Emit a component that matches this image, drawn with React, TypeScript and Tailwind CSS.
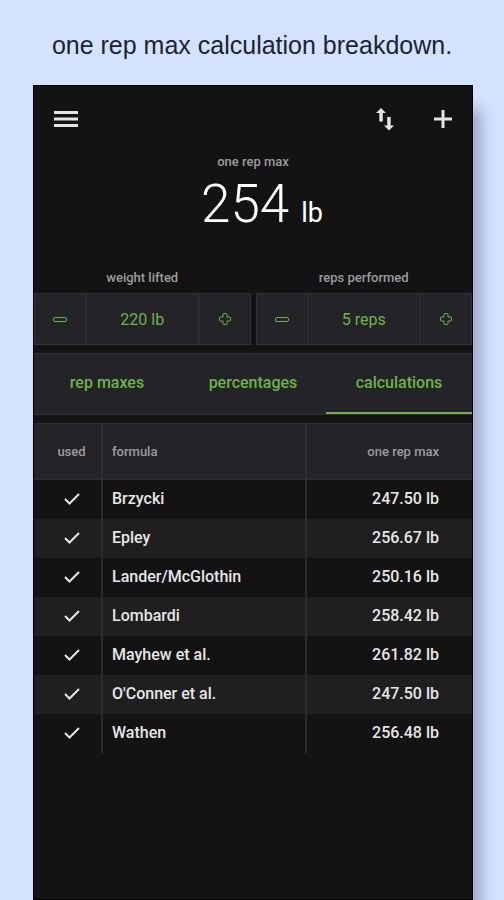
import React, { useState } from 'react';

interface Formula {
  name: string;
  max: string;
}

const formulas: Formula[] = [
  { name: 'Brzycki', max: '247.50 lb' },
  { name: 'Epley', max: '256.67 lb' },
  { name: 'Lander/McGlothin', max: '250.16 lb' },
  { name: 'Lombardi', max: '258.42 lb' },
  { name: 'Mayhew et al.', max: '261.82 lb' },
  { name: "O'Conner et al.", max: '247.50 lb' },
  { name: 'Wathen', max: '256.48 lb' },
];

const tabs = ['rep maxes', 'percentages', 'calculations'];

const MenuIcon = () => (
  <svg viewBox="0 0 24 18" className="w-6 h-[18px]" fill="currentColor">
    <path d="M0 1h24v3H0zM0 7.500h24v3H0zM0 14h24v3H0z" />
  </svg>
);

const SwapIcon = () => (
  <svg viewBox="0 0 18 24" className="w-[18px] h-6" fill="currentColor">
    <path d="M5 1L10 6H6.800V14.500H3.300V6H0Z" />
    <path d="M13 23.500L8 18.500H11.200V10H14.700V18.500H18Z" />
  </svg>
);

const PlusIcon = () => (
  <svg viewBox="0 0 18 18" className="w-[18px] h-[18px]" fill="currentColor">
    <path d="M7.5 0h3v7.5H18v3h-7.5V18h-3v-7.5H0v-3h7.5z" />
  </svg>
);

const MinusOutline = () => (
  <svg viewBox="0 0 14 14" className="w-3.5 h-3.5" fill="none" stroke="currentColor" strokeWidth="1">
    <rect x="0.5" y="5.500" width="13" height="4" rx="1.5" />
  </svg>
);

const PlusOutline = () => (
  <svg viewBox="0 0 14 14" className="w-3.5 h-3.5" fill="none" stroke="currentColor" strokeWidth="1" strokeLinejoin="round">
    <path d="M6 1.5h2q1 0 1 1V5h2.500q1 0 1 1v2q0 1-1 1H9v2.500q0 1-1 1H6q-1 0-1-1V9H2.500q-1 0-1-1V6q0-1 1-1H5V2.500q0-1 1-1z" />
  </svg>
);

const CheckIcon = () => (
  <svg viewBox="0 0 16 12" className="hidden peer-checked:block w-4 h-3" fill="none" stroke="currentColor" strokeWidth="2">
    <path d="M1 6L5.500 10.500L15 1" />
  </svg>
);

interface StepperProps {
  id: string;
  label: string;
  unit: string;
  initial: number;
  step: number;
}

const Stepper: React.FC<StepperProps> = ({ id, label, unit, initial, step }) => {
  const [value, setValue] = useState(initial);

  return (
    <div className="flex-1 min-w-0">
      <label htmlFor={id} className="block h-[30px] pt-[5px] text-center text-[13px] leading-5 font-medium text-[#9c9c9c]">{label}</label>
      <div className="flex h-[52px] border border-[#323234] bg-[#242428] text-[#6cb444]">
        <button aria-label={`decrease ${label}`} onClick={() => setValue(value - step)} className="w-[50px] flex items-center justify-center">
          <MinusOutline />
        </button>
        <input
          id={id}
          value={`${value} ${unit}`}
          onChange={(e) => setValue(parseInt(e.target.value, 10) || 0)}
          className="flex-1 min-w-0 border-x-2 border-[#2d2d30] bg-transparent pt-0.5 text-center text-base outline-none"
        />
        <button aria-label={`increase ${label}`} onClick={() => setValue(value + step)} className="w-[50px] flex items-center justify-center">
          <PlusOutline />
        </button>
      </div>
    </div>
  );
};

export default function App() {
  const [active, setActive] = useState('calculations');

  return (
    <div className="min-h-screen flex flex-col overflow-hidden bg-[#d3e3ff] font-[Roboto,sans-serif]">
      <h1 className="h-[85px] pt-[30px] text-center text-[25px] leading-[30px] text-[#1c2430] font-['Liberation_Sans',sans-serif]">
        one rep max calculation breakdown.
      </h1>

      <main className="flex-1 ml-[33px] mr-[31px] border border-black bg-[#131313] shadow-[10px_22px_14px_-2px_rgba(40,50,100,0.35)]">
        <header className="h-[66px] px-5 flex items-center text-[#e4e4e4]">
          <button aria-label="menu"><MenuIcon /></button>
          <button aria-label="swap" className="ml-auto"><SwapIcon /></button>
          <button aria-label="add" className="ml-10"><PlusIcon /></button>
        </header>

        <section className="h-[111px] text-center">
          <p className="text-[13px] leading-5 font-medium text-[#9c9c9c]">one rep max</p>
          <p className="pl-[18px] text-[53px] leading-[64px] font-light text-white">
            254<span className="ml-3 text-[27px] font-normal">lb</span>
          </p>
        </section>

        <section className="flex gap-[5px]">
          <Stepper id="weight" label="weight lifted" unit="lb" initial={220} step={5} />
          <Stepper id="reps" label="reps performed" unit="reps" initial={5} step={1} />
        </section>

        <nav className="mt-2 flex h-[62px] border-y border-[#323234] bg-[#242428]">
          {tabs.map((tab) => (
            <button
              key={tab}
              onClick={() => setActive(tab)}
              className={`flex-1 text-base font-medium text-[#6cb444] border-b-2 ${
                tab === active ? 'border-[#74ae50]' : 'border-transparent'
              }`}
            >
              {tab}
            </button>
          ))}
        </nav>

        <table className="mt-2 w-full table-fixed border-collapse text-left">
          <thead>
            <tr className="h-14 border-y border-[#2e2e30] bg-[#242428] text-[13px] text-[#9c9c9c]">
              <th className="w-[68px] pl-2 border-r-2 border-[#303032] text-center font-medium">used</th>
              <th className="w-[204px] pl-[9px] border-r-2 border-[#303032] font-medium">formula</th>
              <th className="pr-[33px] text-right font-medium">one rep max</th>
            </tr>
          </thead>
          <tbody>
            {formulas.map((f) => (
              <tr key={f.name} className="h-[39px] even:bg-[#1f1f1f] text-base font-medium text-[#e6e6e6]">
                <td className="pl-2 border-r-2 border-[#2b2b2b]">
                  <label className="flex justify-center">
                    <input type="checkbox" defaultChecked aria-label={`use ${f.name}`} className="peer absolute appearance-none" />
                    <CheckIcon />
                  </label>
                </td>
                <td className="pl-[9px] border-r-2 border-[#2b2b2b]">{f.name}</td>
                <td className="pr-[33px] text-right">{f.max}</td>
              </tr>
            ))}
          </tbody>
        </table>
      </main>
    </div>
  );
}
